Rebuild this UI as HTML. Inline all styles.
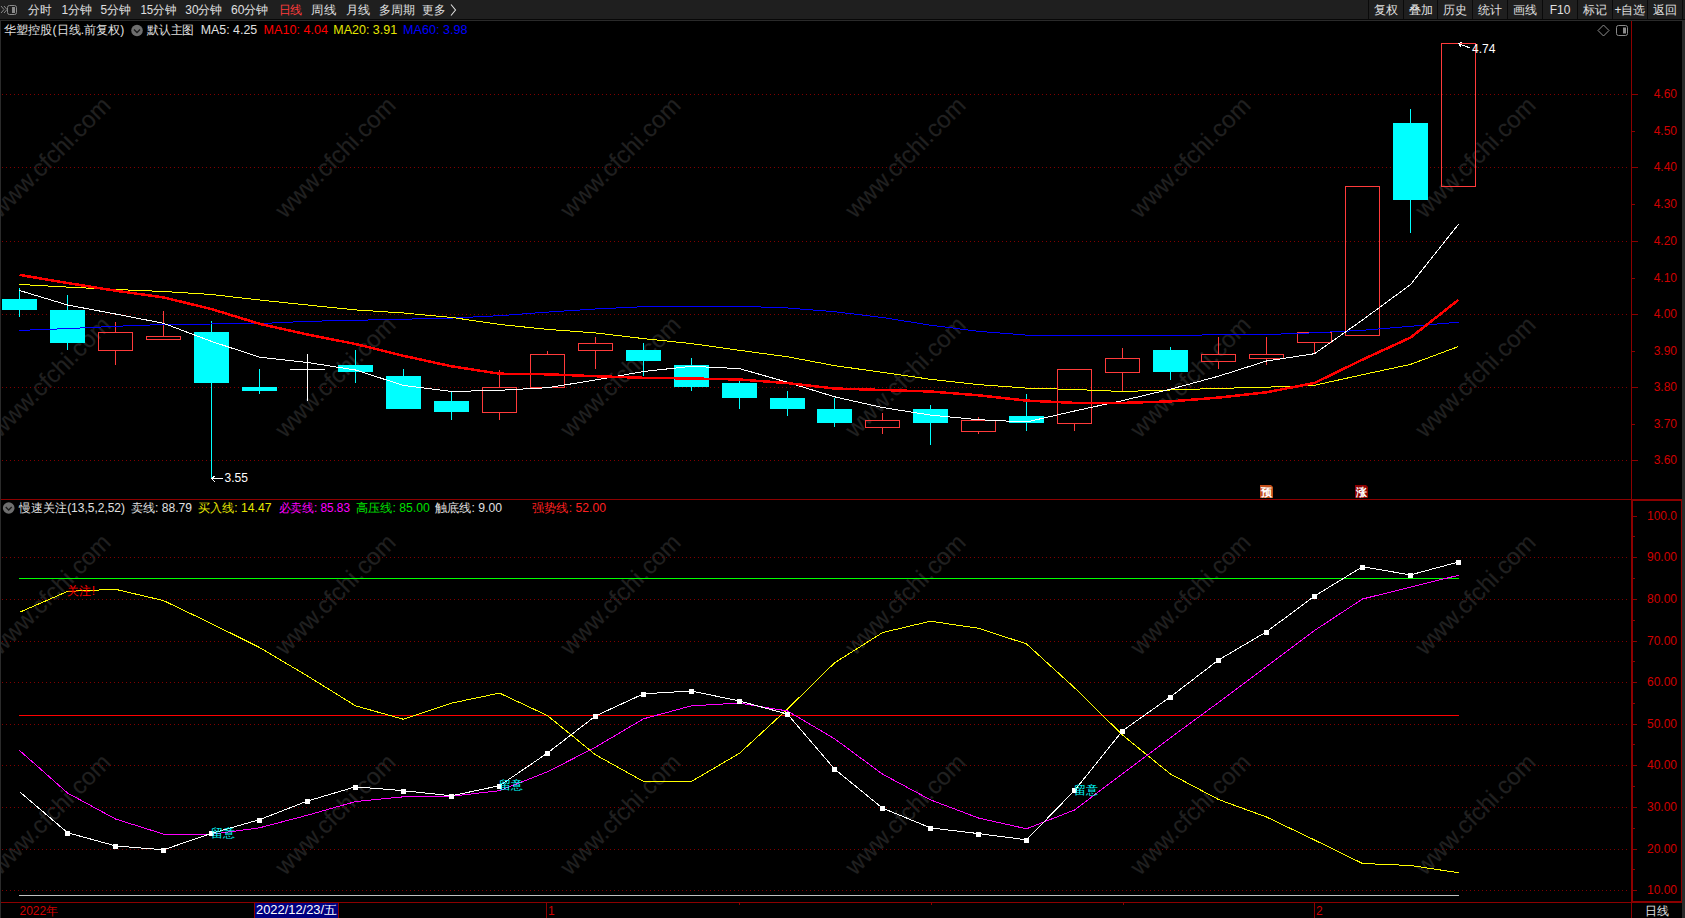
<!DOCTYPE html><html><head><meta charset="utf-8"><style>
html,body{margin:0;padding:0;background:#000;width:1685px;height:918px;overflow:hidden}
svg{position:absolute;left:0;top:0;display:block}
text{font-family:"Liberation Sans",sans-serif;font-size:12px}
</style></head><body>
<svg width="1685" height="918" viewBox="0 0 1685 918">
<rect x="0" y="0" width="1685" height="918" fill="#000"/>
<g fill="#202020" stroke="#202020" stroke-width="0.2" font-size="25" text-anchor="middle">
<text x="50" y="165.5" transform="rotate(-45 50 157)" style="font-size:24px">www.cfchi.com</text>
<text x="335" y="165.5" transform="rotate(-45 335 157)" style="font-size:24px">www.cfchi.com</text>
<text x="620" y="165.5" transform="rotate(-45 620 157)" style="font-size:24px">www.cfchi.com</text>
<text x="905" y="165.5" transform="rotate(-45 905 157)" style="font-size:24px">www.cfchi.com</text>
<text x="1190" y="165.5" transform="rotate(-45 1190 157)" style="font-size:24px">www.cfchi.com</text>
<text x="1475" y="165.5" transform="rotate(-45 1475 157)" style="font-size:24px">www.cfchi.com</text>
<text x="50" y="385.0" transform="rotate(-45 50 376.5)" style="font-size:24px">www.cfchi.com</text>
<text x="335" y="385.0" transform="rotate(-45 335 376.5)" style="font-size:24px">www.cfchi.com</text>
<text x="620" y="385.0" transform="rotate(-45 620 376.5)" style="font-size:24px">www.cfchi.com</text>
<text x="905" y="385.0" transform="rotate(-45 905 376.5)" style="font-size:24px">www.cfchi.com</text>
<text x="1190" y="385.0" transform="rotate(-45 1190 376.5)" style="font-size:24px">www.cfchi.com</text>
<text x="1475" y="385.0" transform="rotate(-45 1475 376.5)" style="font-size:24px">www.cfchi.com</text>
<text x="50" y="602.5" transform="rotate(-45 50 594)" style="font-size:24px">www.cfchi.com</text>
<text x="335" y="602.5" transform="rotate(-45 335 594)" style="font-size:24px">www.cfchi.com</text>
<text x="620" y="602.5" transform="rotate(-45 620 594)" style="font-size:24px">www.cfchi.com</text>
<text x="905" y="602.5" transform="rotate(-45 905 594)" style="font-size:24px">www.cfchi.com</text>
<text x="1190" y="602.5" transform="rotate(-45 1190 594)" style="font-size:24px">www.cfchi.com</text>
<text x="1475" y="602.5" transform="rotate(-45 1475 594)" style="font-size:24px">www.cfchi.com</text>
<text x="50" y="822.5" transform="rotate(-45 50 814)" style="font-size:24px">www.cfchi.com</text>
<text x="335" y="822.5" transform="rotate(-45 335 814)" style="font-size:24px">www.cfchi.com</text>
<text x="620" y="822.5" transform="rotate(-45 620 814)" style="font-size:24px">www.cfchi.com</text>
<text x="905" y="822.5" transform="rotate(-45 905 814)" style="font-size:24px">www.cfchi.com</text>
<text x="1190" y="822.5" transform="rotate(-45 1190 814)" style="font-size:24px">www.cfchi.com</text>
<text x="1475" y="822.5" transform="rotate(-45 1475 814)" style="font-size:24px">www.cfchi.com</text>
</g>
<line x1="2" y1="94.5" x2="1630" y2="94.5" stroke="#800000" stroke-width="1" stroke-dasharray="1 3" shape-rendering="crispEdges"/>
<line x1="2" y1="167.5" x2="1630" y2="167.5" stroke="#800000" stroke-width="1" stroke-dasharray="1 3" shape-rendering="crispEdges"/>
<line x1="2" y1="241.5" x2="1630" y2="241.5" stroke="#800000" stroke-width="1" stroke-dasharray="1 3" shape-rendering="crispEdges"/>
<line x1="2" y1="314.5" x2="1630" y2="314.5" stroke="#800000" stroke-width="1" stroke-dasharray="1 3" shape-rendering="crispEdges"/>
<line x1="2" y1="387.5" x2="1630" y2="387.5" stroke="#800000" stroke-width="1" stroke-dasharray="1 3" shape-rendering="crispEdges"/>
<line x1="2" y1="460.5" x2="1630" y2="460.5" stroke="#800000" stroke-width="1" stroke-dasharray="1 3" shape-rendering="crispEdges"/>
<line x1="2" y1="557.5" x2="1630" y2="557.5" stroke="#800000" stroke-width="1" stroke-dasharray="1 3" shape-rendering="crispEdges"/>
<line x1="2" y1="599.5" x2="1630" y2="599.5" stroke="#800000" stroke-width="1" stroke-dasharray="1 3" shape-rendering="crispEdges"/>
<line x1="2" y1="641.5" x2="1630" y2="641.5" stroke="#800000" stroke-width="1" stroke-dasharray="1 3" shape-rendering="crispEdges"/>
<line x1="2" y1="682.5" x2="1630" y2="682.5" stroke="#800000" stroke-width="1" stroke-dasharray="1 3" shape-rendering="crispEdges"/>
<line x1="2" y1="724.5" x2="1630" y2="724.5" stroke="#800000" stroke-width="1" stroke-dasharray="1 3" shape-rendering="crispEdges"/>
<line x1="2" y1="765.5" x2="1630" y2="765.5" stroke="#800000" stroke-width="1" stroke-dasharray="1 3" shape-rendering="crispEdges"/>
<line x1="2" y1="807.5" x2="1630" y2="807.5" stroke="#800000" stroke-width="1" stroke-dasharray="1 3" shape-rendering="crispEdges"/>
<line x1="2" y1="849.5" x2="1630" y2="849.5" stroke="#800000" stroke-width="1" stroke-dasharray="1 3" shape-rendering="crispEdges"/>
<line x1="2" y1="890.5" x2="1630" y2="890.5" stroke="#800000" stroke-width="1" stroke-dasharray="1 3" shape-rendering="crispEdges"/>
<g shape-rendering="crispEdges">
<rect x="19" y="288" width="1" height="29" fill="#00ffff"/>
<rect x="2" y="299" width="35" height="11" fill="#00ffff"/>
<rect x="67" y="295" width="1" height="55" fill="#00ffff"/>
<rect x="50" y="310" width="35" height="33" fill="#00ffff"/>
<rect x="115" y="322" width="1" height="10" fill="#ff3b3b"/>
<rect x="115" y="351" width="1" height="14" fill="#ff3b3b"/>
<rect x="98.5" y="332.5" width="34" height="18" fill="none" stroke="#ff3b3b" stroke-width="1"/>
<rect x="163" y="311" width="1" height="25" fill="#ff3b3b"/>
<rect x="146.5" y="336.5" width="34" height="3" fill="none" stroke="#ff3b3b" stroke-width="1"/>
<rect x="211" y="321" width="1" height="158" fill="#00ffff"/>
<rect x="194" y="332" width="35" height="51" fill="#00ffff"/>
<rect x="259" y="369" width="1" height="25" fill="#00ffff"/>
<rect x="242" y="387" width="35" height="4" fill="#00ffff"/>
<rect x="307" y="354" width="1" height="47" fill="#ffffff"/>
<rect x="290" y="369" width="35" height="1" fill="#ffffff"/>
<rect x="355" y="350" width="1" height="33" fill="#00ffff"/>
<rect x="338" y="365" width="35" height="7" fill="#00ffff"/>
<rect x="403" y="369" width="1" height="40" fill="#00ffff"/>
<rect x="386" y="376" width="35" height="33" fill="#00ffff"/>
<rect x="451" y="391" width="1" height="29" fill="#00ffff"/>
<rect x="434" y="401" width="35" height="11" fill="#00ffff"/>
<rect x="499" y="370" width="1" height="17" fill="#ff3b3b"/>
<rect x="499" y="413" width="1" height="7" fill="#ff3b3b"/>
<rect x="482.5" y="387.5" width="34" height="25" fill="none" stroke="#ff3b3b" stroke-width="1"/>
<rect x="547" y="351" width="1" height="3" fill="#ff3b3b"/>
<rect x="530.5" y="354.5" width="34" height="33" fill="none" stroke="#ff3b3b" stroke-width="1"/>
<rect x="595" y="337" width="1" height="6" fill="#ff3b3b"/>
<rect x="595" y="351" width="1" height="18" fill="#ff3b3b"/>
<rect x="578.5" y="343.5" width="34" height="7" fill="none" stroke="#ff3b3b" stroke-width="1"/>
<rect x="643" y="343" width="1" height="33" fill="#00ffff"/>
<rect x="626" y="350" width="35" height="11" fill="#00ffff"/>
<rect x="691" y="358" width="1" height="33" fill="#00ffff"/>
<rect x="674" y="365" width="35" height="22" fill="#00ffff"/>
<rect x="739" y="381" width="1" height="28" fill="#00ffff"/>
<rect x="722" y="383" width="35" height="15" fill="#00ffff"/>
<rect x="787" y="391" width="1" height="25" fill="#00ffff"/>
<rect x="770" y="398" width="35" height="11" fill="#00ffff"/>
<rect x="834" y="398" width="1" height="29" fill="#00ffff"/>
<rect x="817" y="409" width="35" height="14" fill="#00ffff"/>
<rect x="882" y="413" width="1" height="7" fill="#ff3b3b"/>
<rect x="882" y="428" width="1" height="6" fill="#ff3b3b"/>
<rect x="865.5" y="420.5" width="34" height="7" fill="none" stroke="#ff3b3b" stroke-width="1"/>
<rect x="930" y="405" width="1" height="40" fill="#00ffff"/>
<rect x="913" y="409" width="35" height="14" fill="#00ffff"/>
<rect x="978" y="417" width="1" height="3" fill="#ff3b3b"/>
<rect x="978" y="432" width="1" height="2" fill="#ff3b3b"/>
<rect x="961.5" y="420.5" width="34" height="11" fill="none" stroke="#ff3b3b" stroke-width="1"/>
<rect x="1026" y="394" width="1" height="37" fill="#00ffff"/>
<rect x="1009" y="416" width="35" height="7" fill="#00ffff"/>
<rect x="1074" y="424" width="1" height="7" fill="#ff3b3b"/>
<rect x="1057.5" y="369.5" width="34" height="54" fill="none" stroke="#ff3b3b" stroke-width="1"/>
<rect x="1122" y="348" width="1" height="10" fill="#ff3b3b"/>
<rect x="1122" y="373" width="1" height="18" fill="#ff3b3b"/>
<rect x="1105.5" y="358.5" width="34" height="14" fill="none" stroke="#ff3b3b" stroke-width="1"/>
<rect x="1170" y="347" width="1" height="33" fill="#00ffff"/>
<rect x="1153" y="350" width="35" height="22" fill="#00ffff"/>
<rect x="1218" y="337" width="1" height="17" fill="#ff3b3b"/>
<rect x="1218" y="362" width="1" height="7" fill="#ff3b3b"/>
<rect x="1201.5" y="354.5" width="34" height="7" fill="none" stroke="#ff3b3b" stroke-width="1"/>
<rect x="1266" y="337" width="1" height="17" fill="#ff3b3b"/>
<rect x="1266" y="359" width="1" height="6" fill="#ff3b3b"/>
<rect x="1249.5" y="354.5" width="34" height="4" fill="none" stroke="#ff3b3b" stroke-width="1"/>
<rect x="1314" y="343" width="1" height="11" fill="#ff3b3b"/>
<rect x="1297.5" y="332.5" width="34" height="10" fill="none" stroke="#ff3b3b" stroke-width="1"/>
<rect x="1345.5" y="186.5" width="34" height="149" fill="none" stroke="#ff3b3b" stroke-width="1"/>
<rect x="1410" y="109" width="1" height="124" fill="#00ffff"/>
<rect x="1393" y="123" width="35" height="77" fill="#00ffff"/>
<rect x="1441.5" y="43.5" width="34" height="143" fill="none" stroke="#ff3b3b" stroke-width="1"/>
</g>
<polyline points="19.5,330.4 67.5,328.6 115.5,326.3 163.5,324.5 211.5,324 259.5,323.6 307.5,321.3 355.5,320.3 403.5,319.2 451.5,318.1 499.5,315.7 547.5,312.1 595.5,309 643.5,306.7 691.5,306.2 739.5,306.2 787.5,308 834.5,311.7 882.5,317.5 930.5,325.2 978.5,331.3 1026.5,335.1 1074.5,335.4 1122.5,335.4 1170.5,335.4 1218.5,334.8 1266.5,334.5 1314.5,332.8 1362.5,330.3 1410.5,326.3 1458.5,322.2" fill="none" stroke="#0000ff" stroke-width="1" stroke-linejoin="round" shape-rendering="crispEdges"/>
<polyline points="19.5,284.4 67.5,287.1 115.5,289.5 163.5,291.5 211.5,294.5 259.5,300 307.5,305 355.5,309.9 403.5,313 451.5,317.4 499.5,324.4 547.5,329.4 595.5,332.9 643.5,338.6 691.5,343.6 739.5,350.3 787.5,356.8 834.5,365.6 882.5,372.4 930.5,379.3 978.5,384.6 1026.5,388.1 1074.5,389.5 1122.5,391.5 1170.5,390 1218.5,388.4 1266.5,387.2 1314.5,385.3 1362.5,374.7 1410.5,364.4 1458.5,346.5" fill="none" stroke="#ffff00" stroke-width="1" stroke-linejoin="round" shape-rendering="crispEdges"/>
<polyline points="19.5,290.5 67.5,305 115.5,314 163.5,323.3 211.5,341.4 259.5,357.2 307.5,362.5 355.5,370 403.5,385.4 451.5,391.5 499.5,390.3 547.5,387.7 595.5,380 643.5,371.5 691.5,366.3 739.5,368.6 787.5,382.3 834.5,396.8 882.5,407.5 930.5,415.1 978.5,419.7 1026.5,422 1074.5,411 1122.5,400.6 1170.5,389.2 1218.5,376.2 1266.5,361 1314.5,353.7 1362.5,320 1410.5,284.6 1458.5,224.2" fill="none" stroke="#ffffff" stroke-width="1" stroke-linejoin="round" shape-rendering="crispEdges"/>
<polyline points="19.5,274.9 67.5,283 115.5,290.7 163.5,297.4 211.5,309.1 259.5,323.8 307.5,334.5 355.5,344 403.5,355.8 451.5,366.3 499.5,373.7 547.5,374.3 595.5,376.2 643.5,377.8 691.5,378.5 739.5,379.5 787.5,383.1 834.5,388.5 882.5,390 930.5,391.5 978.5,395.3 1026.5,400.6 1074.5,402.9 1122.5,402.9 1170.5,401.4 1218.5,397.6 1266.5,392.3 1314.5,383 1362.5,359.6 1410.5,337.6 1458.5,299.8" fill="none" stroke="#ff0000" stroke-width="2.5" stroke-linejoin="round" shape-rendering="crispEdges"/>
<g stroke="#ffffff" stroke-width="1" fill="none" shape-rendering="crispEdges">
<path d="M211.5 478.5 H223 M211.5 478.5 L215.5 475.5 M211.5 478.5 L215.5 482.5"/>
<path d="M1458.5 43.5 L1470 48 M1458.5 43.5 L1462 42.5 M1458.5 43.5 L1461 47"/>
</g>
<text x="224.5" y="482" fill="#ffffff">3.55</text>
<text x="1472" y="53" fill="#ffffff">4.74</text>
<path d="M1260 485 H1271 L1273 487 V498 H1260 Z" fill="#c4501b"/>
<text x="1261" y="495.5" fill="#fff" style="font-size:11px;font-weight:bold">预</text>
<path d="M1355 485 H1366 L1368 487 V498 H1355 Z" fill="#8c0000"/>
<text x="1356" y="495.5" fill="#fff" style="font-size:11px;font-weight:bold">涨</text>
<g shape-rendering="crispEdges">
<rect x="19" y="578" width="1440" height="1" fill="#00ff00"/>
<rect x="19" y="715" width="1440" height="1" fill="#ff0000"/>
<rect x="19" y="895" width="1440" height="1" fill="#c0c0c0"/>
</g>
<polyline points="19.5,612.3 67.5,591.4 115.5,589.3 163.5,600.6 211.5,623.6 259.5,647.5 307.5,676 355.5,705.8 403.5,719.3 451.5,703.1 499.5,693.1 547.5,715.6 595.5,754.8 643.5,781.4 691.5,781.4 739.5,753.3 787.5,709 834.5,662.9 882.5,632.6 930.5,621.2 978.5,628.3 1026.5,643.9 1074.5,687.8 1122.5,735 1170.5,774.1 1218.5,799.5 1266.5,817 1314.5,840 1362.5,863.5 1410.5,865.5 1458.5,872.7" fill="none" stroke="#ffff00" stroke-width="1" stroke-linejoin="round" shape-rendering="crispEdges"/>
<polyline points="19.5,750.4 67.5,793 115.5,819 163.5,834.1 211.5,834.3 259.5,827.8 307.5,815.2 355.5,801.6 403.5,796.8 451.5,796.2 499.5,790.7 547.5,771.8 595.5,747.2 643.5,718.8 691.5,705.8 739.5,703.1 787.5,711 834.5,738.7 882.5,774.1 930.5,799.9 978.5,818 1026.5,828.8 1074.5,810 1122.5,773.7 1170.5,737.7 1218.5,702.5 1266.5,666.5 1314.5,630.5 1362.5,599 1410.5,587.1 1458.5,575.3" fill="none" stroke="#ff00ff" stroke-width="1" stroke-linejoin="round" shape-rendering="crispEdges"/>
<polyline points="19.5,791.6 67.5,832.7 115.5,845.9 163.5,849.8 211.5,833.3 259.5,819.7 307.5,801 355.5,786.8 403.5,790.7 451.5,795.8 499.5,785.7 547.5,753 595.5,716 643.5,693.8 691.5,691 739.5,701 787.5,714.1 834.5,769 882.5,808.1 930.5,827.9 978.5,833.6 1026.5,839.8 1074.5,790.5 1122.5,730.8 1170.5,696.8 1218.5,660 1266.5,631.8 1314.5,596.1 1362.5,566.7 1410.5,574.9 1458.5,562" fill="none" stroke="#ffffff" stroke-width="1" stroke-linejoin="round" shape-rendering="crispEdges"/>
<g fill="#ffffff" shape-rendering="crispEdges">
<rect x="65" y="831" width="5" height="5"/>
<rect x="113" y="844" width="5" height="5"/>
<rect x="161" y="848" width="5" height="5"/>
<rect x="209" y="831" width="5" height="5"/>
<rect x="257" y="818" width="5" height="5"/>
<rect x="305" y="799" width="5" height="5"/>
<rect x="353" y="785" width="5" height="5"/>
<rect x="401" y="789" width="5" height="5"/>
<rect x="449" y="794" width="5" height="5"/>
<rect x="497" y="784" width="5" height="5"/>
<rect x="545" y="751" width="5" height="5"/>
<rect x="593" y="714" width="5" height="5"/>
<rect x="641" y="692" width="5" height="5"/>
<rect x="689" y="689" width="5" height="5"/>
<rect x="737" y="699" width="5" height="5"/>
<rect x="785" y="712" width="5" height="5"/>
<rect x="832" y="767" width="5" height="5"/>
<rect x="880" y="806" width="5" height="5"/>
<rect x="928" y="826" width="5" height="5"/>
<rect x="976" y="832" width="5" height="5"/>
<rect x="1024" y="838" width="5" height="5"/>
<rect x="1072" y="788" width="5" height="5"/>
<rect x="1120" y="729" width="5" height="5"/>
<rect x="1168" y="695" width="5" height="5"/>
<rect x="1216" y="658" width="5" height="5"/>
<rect x="1264" y="630" width="5" height="5"/>
<rect x="1312" y="594" width="5" height="5"/>
<rect x="1360" y="565" width="5" height="5"/>
<rect x="1408" y="573" width="5" height="5"/>
<rect x="1456" y="560" width="5" height="5"/>
</g>
<text x="67" y="594.5" fill="#ff0000" textLength="28" lengthAdjust="spacing">关注!</text>
<text x="210.5" y="837" fill="#00ffff">留意</text>
<text x="498.5" y="789" fill="#00ffff">留意</text>
<text x="1073.5" y="794" fill="#00ffff">留意</text>
<g shape-rendering="crispEdges">
<rect x="1631" y="21" width="1" height="478" fill="#8c0000"/>
<rect x="0" y="499" width="1682" height="1" fill="#8c0000"/>
<rect x="1631" y="499" width="51" height="2" fill="#8c0000"/>
<rect x="1631" y="499" width="2" height="404" fill="#8c0000"/>
<rect x="1681" y="499" width="1" height="404" fill="#8c0000"/>
<rect x="1631" y="901" width="51" height="2" fill="#8c0000"/>
<rect x="1631" y="902" width="1" height="16" fill="#8c0000"/>
<rect x="0" y="902" width="1631" height="1" fill="#8c0000"/>
<rect x="1682" y="0" width="3" height="918" fill="#2a2a2a"/>
<rect x="0" y="21" width="1" height="897" fill="#2a2a2a"/>
<rect x="1632" y="94" width="6" height="1" fill="#8c0000"/>
<rect x="1632" y="131" width="3" height="1" fill="#8c0000"/>
<rect x="1632" y="167" width="6" height="1" fill="#8c0000"/>
<rect x="1632" y="204" width="3" height="1" fill="#8c0000"/>
<rect x="1632" y="241" width="6" height="1" fill="#8c0000"/>
<rect x="1632" y="278" width="3" height="1" fill="#8c0000"/>
<rect x="1632" y="314" width="6" height="1" fill="#8c0000"/>
<rect x="1632" y="351" width="3" height="1" fill="#8c0000"/>
<rect x="1632" y="387" width="6" height="1" fill="#8c0000"/>
<rect x="1632" y="424" width="3" height="1" fill="#8c0000"/>
<rect x="1632" y="460" width="6" height="1" fill="#8c0000"/>
<rect x="1633" y="516" width="4" height="1" fill="#8c0000"/>
<rect x="1633" y="557" width="4" height="1" fill="#8c0000"/>
<rect x="1633" y="599" width="4" height="1" fill="#8c0000"/>
<rect x="1633" y="641" width="4" height="1" fill="#8c0000"/>
<rect x="1633" y="682" width="4" height="1" fill="#8c0000"/>
<rect x="1633" y="724" width="4" height="1" fill="#8c0000"/>
<rect x="1633" y="765" width="4" height="1" fill="#8c0000"/>
<rect x="1633" y="807" width="4" height="1" fill="#8c0000"/>
<rect x="1633" y="849" width="4" height="1" fill="#8c0000"/>
<rect x="1633" y="890" width="4" height="1" fill="#8c0000"/>
<rect x="1633" y="536" width="2" height="1" fill="#8c0000"/>
<rect x="1633" y="578" width="2" height="1" fill="#8c0000"/>
<rect x="1633" y="620" width="2" height="1" fill="#8c0000"/>
<rect x="1633" y="661" width="2" height="1" fill="#8c0000"/>
<rect x="1633" y="703" width="2" height="1" fill="#8c0000"/>
<rect x="1633" y="744" width="2" height="1" fill="#8c0000"/>
<rect x="1633" y="786" width="2" height="1" fill="#8c0000"/>
<rect x="1633" y="828" width="2" height="1" fill="#8c0000"/>
<rect x="1633" y="869" width="2" height="1" fill="#8c0000"/>
<rect x="546" y="902" width="1" height="16" fill="#8c0000"/>
<rect x="1314" y="902" width="1" height="16" fill="#8c0000"/>
<rect x="739" y="902" width="1" height="3" fill="#8c0000"/>
<rect x="931" y="902" width="1" height="3" fill="#8c0000"/>
<rect x="1123" y="902" width="1" height="3" fill="#8c0000"/>
</g>
<g fill="#d00000" text-anchor="end">
<text x="1677" y="98.0">4.60</text>
<text x="1677" y="135.0">4.50</text>
<text x="1677" y="171.0">4.40</text>
<text x="1677" y="208.0">4.30</text>
<text x="1677" y="245.0">4.20</text>
<text x="1677" y="282.0">4.10</text>
<text x="1677" y="318.0">4.00</text>
<text x="1677" y="355.0">3.90</text>
<text x="1677" y="391.0">3.80</text>
<text x="1677" y="428.0">3.70</text>
<text x="1677" y="464.0">3.60</text>
<text x="1677" y="520.0">100.0</text>
<text x="1677" y="561.0">90.00</text>
<text x="1677" y="603.0">80.00</text>
<text x="1677" y="645.0">70.00</text>
<text x="1677" y="686.0">60.00</text>
<text x="1677" y="728.0">50.00</text>
<text x="1677" y="769.0">40.00</text>
<text x="1677" y="811.0">30.00</text>
<text x="1677" y="853.0">20.00</text>
<text x="1677" y="894.0">10.00</text>
</g>
<text x="19.5" y="915" fill="#d00000">2022年</text>
<text x="548" y="915" fill="#d00000">1</text>
<text x="1316" y="915" fill="#d00000">2</text>
<rect x="254.5" y="902.5" width="84" height="16" fill="#000080" stroke="#8c0000" stroke-width="1"/>
<text x="256" y="914" fill="#ffffff" textLength="81" lengthAdjust="spacingAndGlyphs">2022/12/23/五</text>
<text x="1645" y="915" fill="#e0e0e0">日线</text>
<rect x="0" y="0" width="1685" height="19" fill="#1f1f1f"/>
<rect x="0" y="19" width="1685" height="1" fill="#070707"/>
<rect x="0" y="20" width="1682" height="1" fill="#2a2a2a"/>
<g stroke="#8a8a8a" fill="none" stroke-width="1">
<path d="M1 6 L4 9.5 L1 13 M4 6 L7 9.5 L4 13"/>
<rect x="7.5" y="5.5" width="9" height="9" rx="2"/>
</g><rect x="12" y="7" width="3" height="6" fill="#8a8a8a"/>
<text x="28.2" y="14" fill="#e0e0e0" textLength="23.3" lengthAdjust="spacingAndGlyphs">分时</text>
<text x="61.5" y="14" fill="#e0e0e0" textLength="30.4" lengthAdjust="spacingAndGlyphs">1分钟</text>
<text x="100.5" y="14" fill="#e0e0e0" textLength="30.3" lengthAdjust="spacingAndGlyphs">5分钟</text>
<text x="140.4" y="14" fill="#e0e0e0" textLength="35.7" lengthAdjust="spacingAndGlyphs">15分钟</text>
<text x="185.3" y="14" fill="#e0e0e0" textLength="36.9" lengthAdjust="spacingAndGlyphs">30分钟</text>
<text x="231" y="14" fill="#e0e0e0" textLength="37.4" lengthAdjust="spacingAndGlyphs">60分钟</text>
<text x="278.5" y="14" fill="#ff3c3c" textLength="23.9" lengthAdjust="spacingAndGlyphs">日线</text>
<text x="311.4" y="14" fill="#e0e0e0" textLength="24.9" lengthAdjust="spacingAndGlyphs">周线</text>
<text x="345.6" y="14" fill="#e0e0e0" textLength="24.3" lengthAdjust="spacingAndGlyphs">月线</text>
<text x="378.9" y="14" fill="#e0e0e0" textLength="35.9" lengthAdjust="spacingAndGlyphs">多周期</text>
<text x="422" y="14" fill="#e0e0e0" textLength="23.3" lengthAdjust="spacingAndGlyphs">更多</text>
<path d="M451 4.5 L455.5 10 L451 15.5" stroke="#e0e0e0" fill="none" stroke-width="1.1"/>
<rect x="1368" y="0" width="35" height="19" fill="#1f1f1f"/>
<rect x="1368" y="0" width="1" height="19" fill="#0a0a0a"/>
<text x="1386.0" y="14" fill="#e0e0e0" text-anchor="middle">复权</text>
<rect x="1403" y="0" width="34" height="19" fill="#1f1f1f"/>
<rect x="1403" y="0" width="1" height="19" fill="#0a0a0a"/>
<text x="1420.5" y="14" fill="#e0e0e0" text-anchor="middle">叠加</text>
<rect x="1437" y="0" width="35" height="19" fill="#1f1f1f"/>
<rect x="1437" y="0" width="1" height="19" fill="#0a0a0a"/>
<text x="1455.0" y="14" fill="#e0e0e0" text-anchor="middle">历史</text>
<rect x="1472" y="0" width="35" height="19" fill="#1f1f1f"/>
<rect x="1472" y="0" width="1" height="19" fill="#0a0a0a"/>
<text x="1490.0" y="14" fill="#e0e0e0" text-anchor="middle">统计</text>
<rect x="1507" y="0" width="35" height="19" fill="#1f1f1f"/>
<rect x="1507" y="0" width="1" height="19" fill="#0a0a0a"/>
<text x="1525.0" y="14" fill="#e0e0e0" text-anchor="middle">画线</text>
<rect x="1542" y="0" width="35" height="19" fill="#1f1f1f"/>
<rect x="1542" y="0" width="1" height="19" fill="#0a0a0a"/>
<text x="1560.0" y="14" fill="#e0e0e0" text-anchor="middle">F10</text>
<rect x="1577" y="0" width="35" height="19" fill="#1f1f1f"/>
<rect x="1577" y="0" width="1" height="19" fill="#0a0a0a"/>
<text x="1595.0" y="14" fill="#e0e0e0" text-anchor="middle">标记</text>
<rect x="1612" y="0" width="35" height="19" fill="#1f1f1f"/>
<rect x="1612" y="0" width="1" height="19" fill="#0a0a0a"/>
<text x="1630.0" y="14" fill="#e0e0e0" text-anchor="middle">+自选</text>
<rect x="1647" y="0" width="35" height="19" fill="#1f1f1f"/>
<rect x="1647" y="0" width="1" height="19" fill="#0a0a0a"/>
<text x="1665.0" y="14" fill="#e0e0e0" text-anchor="middle">返回</text>
<rect x="1682" y="0" width="1" height="19" fill="#0a0a0a"/>
<text x="4.2" y="34" fill="#e0e0e0" textLength="120.1" lengthAdjust="spacingAndGlyphs">华塑控股(日线.前复权)</text>
<text x="147" y="34" fill="#e0e0e0" textLength="47.0" lengthAdjust="spacingAndGlyphs">默认主图</text>
<text x="200.7" y="34" fill="#e0e0e0" textLength="56.5" lengthAdjust="spacingAndGlyphs">MA5: 4.25</text>
<text x="263.5" y="34" fill="#ff0000" textLength="64.5" lengthAdjust="spacingAndGlyphs">MA10: 4.04</text>
<text x="333.3" y="34" fill="#e6e600" textLength="63.8" lengthAdjust="spacingAndGlyphs">MA20: 3.91</text>
<text x="403.1" y="34" fill="#0000ff" textLength="64.5" lengthAdjust="spacingAndGlyphs">MA60: 3.98</text>
<circle cx="137" cy="30.5" r="5.8" fill="#6e6e6e"/><path d="M134 29.5 L137 32.5 L140 29.5" stroke="#1a1a1a" stroke-width="1.3" fill="none"/>
<path d="M1603.5 25 L1609 30.5 L1603.5 36 L1598 30.5 Z" stroke="#909090" fill="none" stroke-width="1"/>
<rect x="1616.5" y="25.5" width="11" height="10" rx="2" stroke="#8a8a8a" fill="none"/><rect x="1623" y="27.5" width="3" height="6" fill="#8a8a8a"/>
<text x="19.3" y="512" fill="#e0e0e0" textLength="105.7" lengthAdjust="spacingAndGlyphs">慢速关注(13,5,2,52)</text>
<text x="131" y="512" fill="#e0e0e0" textLength="61.0" lengthAdjust="spacingAndGlyphs">卖线: 88.79</text>
<text x="197.8" y="512" fill="#e6e600" textLength="73.6" lengthAdjust="spacingAndGlyphs">买入线: 14.47</text>
<text x="278.5" y="512" fill="#ff00ff" textLength="71.5" lengthAdjust="spacingAndGlyphs">必卖线: 85.83</text>
<text x="356" y="512" fill="#00e000" textLength="73.7" lengthAdjust="spacingAndGlyphs">高压线: 85.00</text>
<text x="435" y="512" fill="#e0e0e0" textLength="67.0" lengthAdjust="spacingAndGlyphs">触底线: 9.00</text>
<text x="532" y="512" fill="#ff2020" textLength="74.0" lengthAdjust="spacingAndGlyphs">强势线: 52.00</text>
<circle cx="8.7" cy="508" r="5.8" fill="#6e6e6e"/><path d="M5.7 507 L8.7 510 L11.7 507" stroke="#1a1a1a" stroke-width="1.3" fill="none"/>
</svg></body></html>
